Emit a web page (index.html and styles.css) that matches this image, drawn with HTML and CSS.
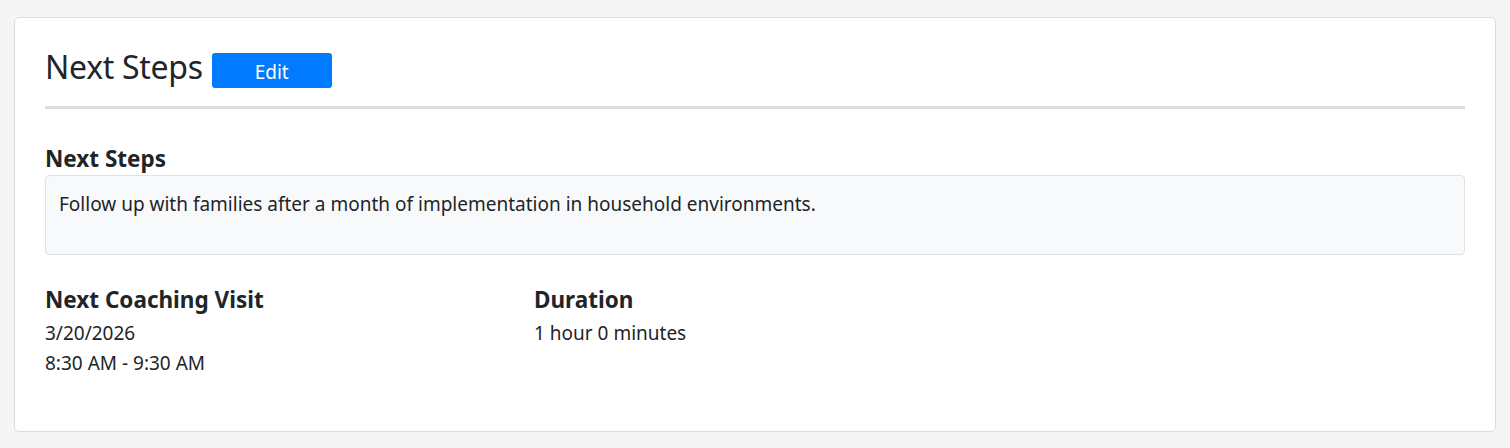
FILE: index.html
```html
<!DOCTYPE html>
<html lang="en">
<head>
<meta charset="utf-8">
<title>Next Steps</title>
<link rel="stylesheet" href="styles.css">
</head>
<body>
<div class="page">
  <section class="card">
    <header class="card-header">
      <h1 class="title">Next Steps</h1>
      <button class="btn-edit" type="button">Edit</button>
    </header>
    <div class="field">
      <h2 class="label">Next Steps</h2>
      <div class="notes">Follow up with families after a month of implementation in household environments.</div>
    </div>
    <div class="details">
      <div class="detail">
        <h2 class="label">Next Coaching Visit</h2>
        <div class="values">
          <div class="value">3/20/2026</div>
          <div class="value">8:30 AM - 9:30 AM</div>
        </div>
      </div>
      <div class="detail">
        <h2 class="label">Duration</h2>
        <div class="values">
          <div class="value">1 hour 0 minutes</div>
        </div>
      </div>
    </div>
  </section>
</div>
</body>
</html>
```

FILE: styles.css
```css
* { box-sizing: border-box; }
html, body { margin: 0; padding: 0; }
body {
  background: #f5f5f5;
  font-family: "Noto Sans", "Open Sans", sans-serif;
  color: #212529;
}
.page {
  padding: 17px 14px 16px;
}
.card {
  background: #fff;
  border: 1px solid #dcdcdc;
  border-radius: 5px;
  padding: 30px 30px 53px;
}
.card-header {
  display: flex;
  align-items: flex-start;
  gap: 9px;
  padding-bottom: 18px;
  border-bottom: 3px solid #dddddd;
}
.title {
  margin: 0;
  font-size: 32px;
  font-weight: 400;
  line-height: 1.2;
  letter-spacing: -0.3px;
}
.btn-edit {
  width: 120px;
  height: 35px;
  margin-top: 5px;
  background: #007bff;
  color: #fff;
  border: none;
  border-radius: 3px;
  font-family: inherit;
  font-size: 19px;
  line-height: 1;
  padding: 3px 0 0;
}
.field {
  margin-top: 36px;
}
.label {
  margin: 0 0 3px;
  font-size: 22.5px;
  font-weight: 700;
  line-height: 27px;
}
.notes {
  background: #f8f9fa;
  border: 1px solid #dee2e6;
  border-radius: 4px;
  padding: 13px 13px 20px;
  font-size: 19px;
  line-height: 30px;
  min-height: 80px;
}
.details {
  display: grid;
  grid-template-columns: 489px 1fr;
  margin-top: 31px;
}
.values {
  margin-top: 5px;
}
.value {
  font-size: 19px;
  line-height: 30px;
}
```
